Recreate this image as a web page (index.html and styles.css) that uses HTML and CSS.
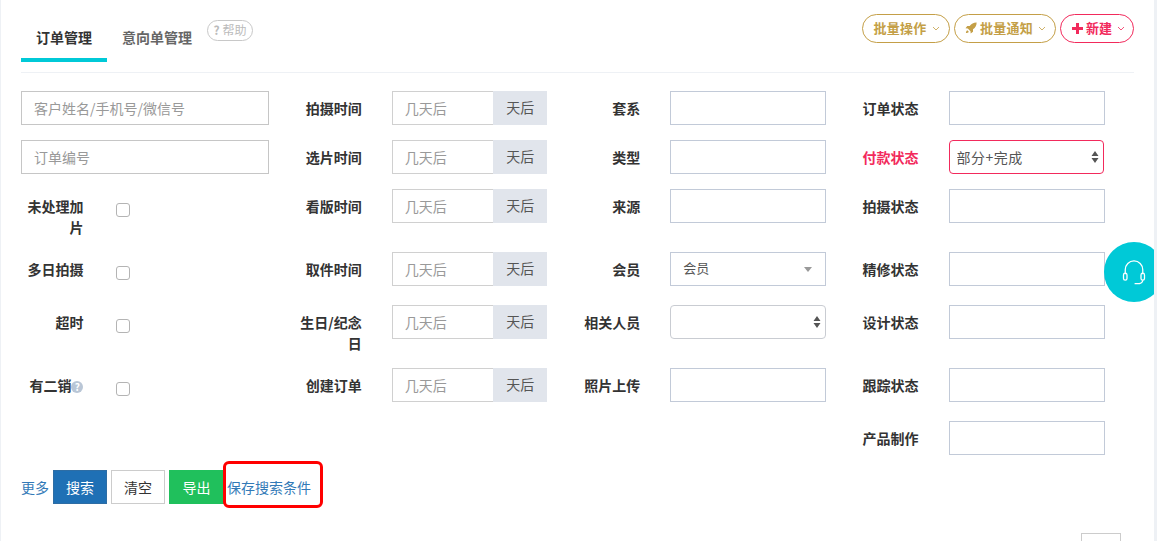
FILE: index.html
```html
<!DOCTYPE html>
<html lang="en">
<head>
    <meta charset="UTF-8">
    <meta name="viewport" content="width=device-width, initial-scale=1.0">
    <title>订单管理</title>
    <link rel="stylesheet" href="styles.css">
</head>
<body>
    <div class="panel">
        <div class="panel-head">
            <div class="tabs">
                <a class="tab active">订单管理</a>
                <a class="tab">意向单管理</a>
                <a class="help-pill"><b>?</b> 帮助</a>
            </div>
            <div class="actions">
                <a class="pill gold">批量操作 <svg class="caret" viewBox="0 0 8 5"><path d="M1 1l3 3 3-3"/></svg></a>
                <a class="pill gold"><svg class="rocket" viewBox="0 0 12 12"><path d="M11.6.4C8.8.3 6.4 1.500 4.700 4H2.300L.5 6.300l2.300.2 2.700 2.700.2 2.300 2.300-1.800V7.300C10.500 5.600 11.700 3.200 11.600.4z"/><path d="M2.300 8.200C1.300 8.700 1 10 .9 11.100 2 11 3.300 10.700 3.800 9.700z"/></svg> 批量通知 <svg class="caret" viewBox="0 0 8 5"><path d="M1 1l3 3 3-3"/></svg></a>
                <a class="pill red"><svg class="plus" viewBox="0 0 11 11"><path d="M4 0h3v4h4v3H7v4H4V7H0V4h4z"/></svg> 新建 <svg class="caret" viewBox="0 0 8 5"><path d="M1 1l3 3 3-3"/></svg></a>
            </div>
        </div>

        <div class="filter-grid">
            <div class="field wide"><input class="gray-input" placeholder="客户姓名/手机号/微信号"></div>
            <div class="field"><label>拍摄时间</label><div class="input-group"><input placeholder="几天后"><span class="addon">天后</span></div></div>
            <div class="field"><label>套系</label><input></div>
            <div class="field"><label>订单状态</label><input></div>

            <div class="field wide"><input class="gray-input" placeholder="订单编号"></div>
            <div class="field"><label>选片时间</label><div class="input-group"><input placeholder="几天后"><span class="addon">天后</span></div></div>
            <div class="field"><label>类型</label><input></div>
            <div class="field"><label class="label-red">付款状态</label><select class="red-select"><option>部分+完成</option></select></div>

            <div class="field"><label class="label-left">未处理加片</label><input type="checkbox"></div>
            <div class="field"><label>看版时间</label><div class="input-group"><input placeholder="几天后"><span class="addon">天后</span></div></div>
            <div class="field"><label>来源</label><input></div>
            <div class="field"><label>拍摄状态</label><input></div>

            <div class="field"><label>多日拍摄</label><input type="checkbox"></div>
            <div class="field"><label>取件时间</label><div class="input-group"><input placeholder="几天后"><span class="addon">天后</span></div></div>
            <div class="field"><label>会员</label><div class="fake-select"><span>会员</span><i class="fake-arrow"></i></div></div>
            <div class="field"><label>精修状态</label><input></div>

            <div class="field"><label>超时</label><input type="checkbox"></div>
            <div class="field"><label>生日/纪念日</label><div class="input-group"><input placeholder="几天后"><span class="addon">天后</span></div></div>
            <div class="field"><label>相关人员</label><select class="gray-select"><option></option></select></div>
            <div class="field"><label>设计状态</label><input></div>

            <div class="field"><label>有二销<span class="hint">?</span></label><input type="checkbox"></div>
            <div class="field"><label>创建订单</label><div class="input-group"><input placeholder="几天后"><span class="addon">天后</span></div></div>
            <div class="field"><label>照片上传</label><input></div>
            <div class="field"><label>跟踪状态</label><input></div>

            <div class="field last-col"><label>产品制作</label><input></div>
        </div>

        <div class="toolbar">
            <a class="link">更多</a>
            <button class="btn blue">搜索</button>
            <button class="btn plain">清空</button>
            <button class="btn green">导出</button>
            <a class="link save-link">保存搜索条件</a>
            <span class="red-mark"></span>
        </div>

        <div class="pager"><span class="page-box"></span></div>

        <a class="chat-bubble">
            <svg viewBox="0 0 24 24"><path d="M4.500 14V10a7.500 7.500 0 0 1 15 0v4"/><rect x="3" y="13" width="3" height="6" rx="1.500"/><rect x="18" y="13" width="3" height="6" rx="1.500"/><path d="M19.500 19c0 1.800-2 3-5 3h-2"/></svg>
        </a>
    </div>
</body>
</html>
```

FILE: styles.css
```css
html, body { height: 100%; overflow: hidden; }
body { margin: 0; background: #eef1f5; font-family: "Noto Sans CJK SC", "Open Sans", sans-serif; font-size: 14px; color: #333; }
a { text-decoration: none; }

.panel { margin: 0 3px 0 1px; height: 541px; background: #fff; padding: 0 20px; box-sizing: border-box; position: relative; overflow: hidden; }

.panel-head { display: flex; justify-content: space-between; height: 72px; border-bottom: 1px solid #eef1f5; }
.tabs { display: flex; align-items: flex-start; padding-top: 18px; }
.tab { height: 40px; line-height: 38px; padding: 0 15px; font-weight: 700; color: #666; }
.tab.active { color: #333; border-bottom: 4px solid #00c9d7; }
.help-pill { margin-top: 2px; width: 46px; height: 21px; line-height: 18px; box-sizing: border-box; border: 1px solid #c8c8c8; border-radius: 11px; font-size: 12px; color: #bbb; text-align: center; }

.actions { display: flex; gap: 4px; padding-top: 14px; }
.pill { height: 29px; line-height: 26px; box-sizing: border-box; border: 1px solid; border-radius: 15px; padding: 0 8px 0 11px; font-size: 13px; font-weight: 700; background: #fff; white-space: nowrap; }
.pill.gold { color: #c49f47; border-color: #c49f47; padding: 0 9px 0 10px; letter-spacing: .25px; }
.pill.red { color: #f22a5c; border-color: #f22a5c; }
.caret { width: 8px; height: 5px; margin-left: 2px; vertical-align: 2px; fill: none; stroke: currentColor; stroke-width: 1; opacity: .8; }
.rocket { width: 12px; height: 12px; fill: currentColor; vertical-align: -1px; }
.plus { width: 11px; height: 11px; fill: currentColor; vertical-align: -1px; }

.filter-grid { display: grid; grid-template-columns: repeat(4, 248.4px); column-gap: 30px; row-gap: 15px; margin-top: 18px; }
.field { display: grid; grid-template-columns: 62.4px 1fr; column-gap: 30px; align-items: start; min-height: 34px; }
.field.wide { display: block; }
.field.last-col { grid-column: 4; }
.field label { padding-top: 7px; margin-bottom: -1px; line-height: 21px; font-weight: 700; text-align: right; }
.field .label-left { padding-left: 6px; }
.field .label-red { color: #f22a5c; }

input, select { box-sizing: border-box; width: 100%; height: 34px; border: 1px solid #c2cad8; background: #fff; padding: 6px 12px; font: inherit; color: #555; outline: 0; border-radius: 0; }
input::placeholder { color: #999; opacity: 1; }
input.gray-input { border-color: #c6c6c6; }
input[type="checkbox"] { appearance: none; width: 14px; height: 14px; margin: 14px 0 10px 3px; padding: 0; justify-self: start; border: 1px solid #b4b4b4; border-radius: 3px; }

.input-group { display: flex; height: 34px; margin-right: .5px; }
.input-group input { flex: 1; min-width: 0; border-color: #d0d0d0; border-right: 0; }
.addon { width: 54px; background: #e1e5ec; color: #555; text-align: center; line-height: 32px; flex: none; }

select { appearance: none; border-radius: 4px; padding: 6px 7px; background: #fff url("data:image/svg+xml,%3Csvg xmlns='http://www.w3.org/2000/svg' width='8' height='12'%3E%3Cpath fill='%23555' d='M4 0l3.500 5H.5zM4 12L.5 7h7z'/%3E%3C/svg%3E") no-repeat right 4px center; }
.red-select { border-color: #f22a5c; width: calc(100% - 1px); letter-spacing: .5px; }
.gray-select { border-color: #c9ccd2; }

.fake-select { height: 34px; box-sizing: border-box; border: 1px solid #c2cad8; padding: 0 12px; display: flex; align-items: center; justify-content: space-between; font-size: 13px; color: #555; line-height: 28px; }
.fake-select span { margin-top: -3px; }
.fake-arrow { width: 0; height: 0; border: 4px solid transparent; border-top: 5px solid #999; border-bottom: 0; margin-right: 1px; }

.hint { display: inline-block; width: 12px; height: 12px; border-radius: 50%; background: #b9c6d6; color: #fff; font-size: 10px; line-height: 12px; text-align: center; vertical-align: 0; }

.toolbar { display: flex; align-items: center; margin-top: 15px; height: 34px; position: relative; }
.link { color: #337ab7; }
.btn { height: 34px; width: 54px; box-sizing: border-box; border: 1px solid; padding: 0; font: inherit; margin-left: 4px; }
.btn.blue { background: #1f70b5; border-color: #2e6da4; color: #fff; }
.btn.plain { background: #fff; border-color: #ccc; color: #333; }
.btn.green { background: #20c05c; border-color: #20c05c; color: #fff; width: 55px; }
.save-link { margin-left: 3px; }
.red-mark { position: absolute; left: 202px; top: -9px; width: 100px; height: 47px; box-sizing: border-box; border: 3px solid #f00; border-radius: 6px; }

.pager { display: flex; justify-content: flex-end; margin-top: 29px; padding-right: 13px; }
.page-box { width: 40px; height: 34px; box-sizing: border-box; border: 1px solid #ccc; }

.chat-bubble { position: absolute; left: 1103px; top: 242px; width: 60px; height: 60px; border-radius: 50%; background: #00c9d7; display: flex; align-items: center; justify-content: center; }
.chat-bubble svg { width: 28px; height: 28px; fill: none; stroke: #fff; stroke-width: 1.100; }
```
